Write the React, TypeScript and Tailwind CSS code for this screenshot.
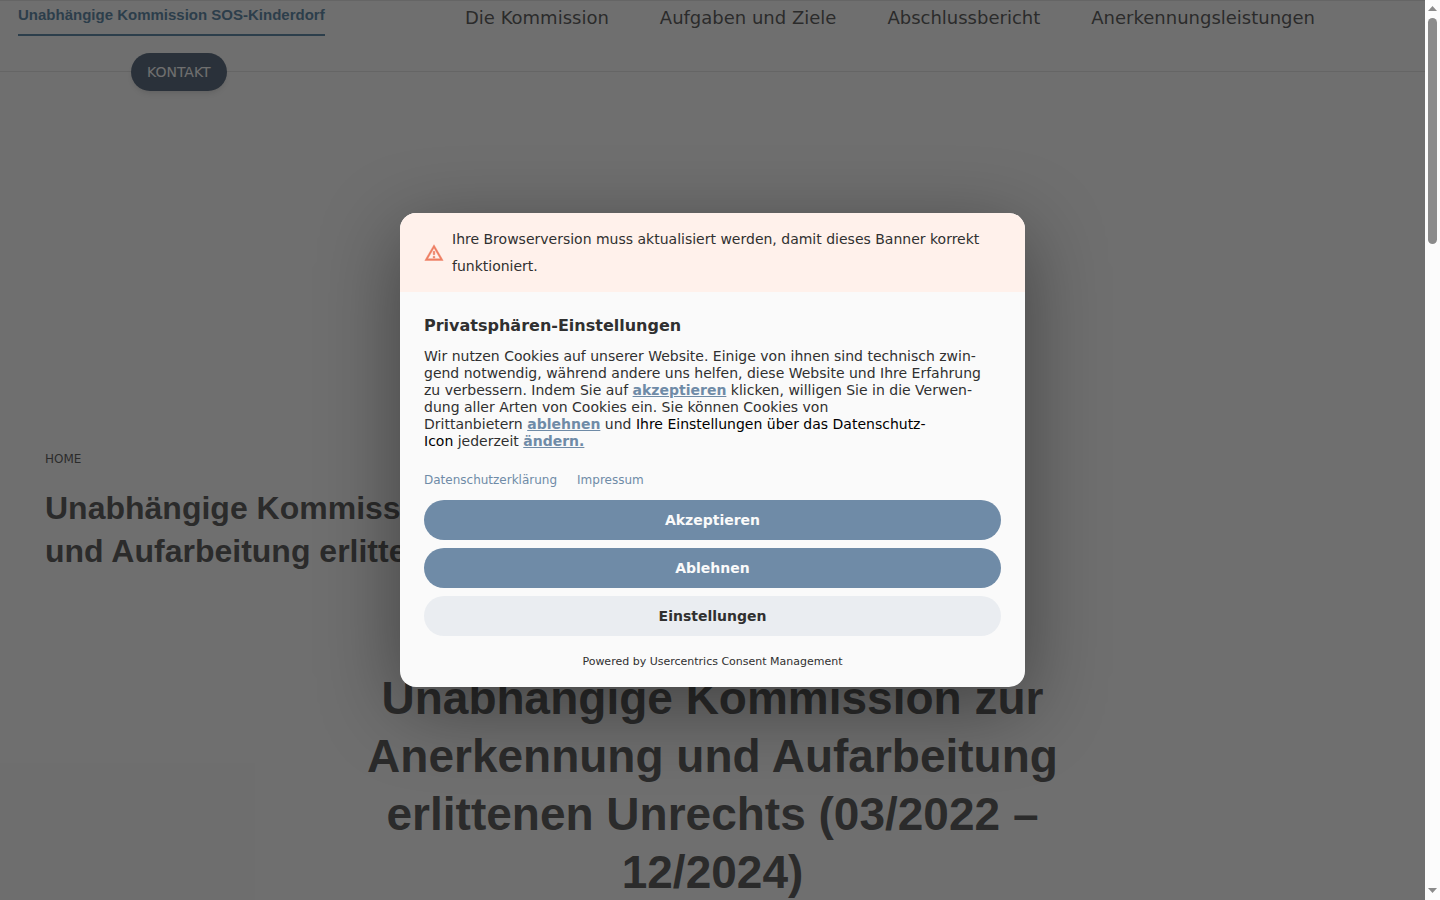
const navItems = [
  "Die Kommission",
  "Aufgaben und Ziele",
  "Abschlussbericht",
  "Anerkennungsleistungen",
];

const linkClass = "font-bold text-[#6f8ba7] underline";

function WarningIcon() {
  return (
    <svg
      viewBox="0 0 24 24"
      aria-hidden="true"
      className="h-5 w-5 shrink-0 fill-[#ee7f63] stroke-[#ee7f63] stroke-[0.5]"
    >
      <path d="M12 5.990 19.530 19H4.470L12 5.990M12 2 1 21h22L12 2zm1 14h-2v2h2v-2zm0-6h-2v4h2v-4z" />
    </svg>
  );
}

function Header() {
  return (
    <header className="relative flex h-[72px] items-start justify-between border-y border-[#e0e0e0] pl-[18px] pr-[110px]">
      <a
        href="#"
        className="border-b-2 border-[#3c7096] pb-[9px] pt-1 font-['Liberation_Sans',sans-serif] text-[15px] font-bold leading-5 text-[#3c7096]"
      >
        Unabhängige Kommission SOS-Kinderdorf
      </a>
      <nav className="flex gap-[51px] pt-[5px] text-lg leading-6 text-[#393939]">
        {navItems.map((item) => (
          <a key={item} href="#">
            {item}
          </a>
        ))}
      </nav>
      <button className="absolute left-[131px] top-[52px] h-[38px] rounded-full bg-[#354a64] px-4 text-sm text-white shadow-md">
        KONTAKT
      </button>
    </header>
  );
}

function CookieDialog() {
  return (
    <div
      role="dialog"
      aria-labelledby="cookie-title"
      className="w-[625px] overflow-hidden rounded-2xl bg-[#fafafa] text-[#303030] shadow-[0_20px_80px_rgba(0,0,0,0.4)]"
    >
      <div className="flex items-center gap-2 bg-[#fff1eb] px-6 pb-3 pt-[13px]">
        <WarningIcon />
        <p className="text-sm leading-[27px]">
          Ihre Browserversion muss aktualisiert werden, damit dieses Banner
          korrekt funktioniert.
        </p>
      </div>

      <div className="px-6 pb-[17px] pt-6">
        <h2 id="cookie-title" className="text-base font-bold leading-5">
          Privatsphären-Einstellungen
        </h2>
        <p className="mt-3 text-sm leading-[17px]">
          Wir nutzen Cookies auf unserer Website. Einige von ihnen sind
          technisch zwin&shy;gend notwendig, während andere uns helfen, diese
          Website und Ihre Erfahrung zu verbessern. Indem Sie auf{" "}
          <a href="#" className={linkClass}>
            akzeptieren
          </a>{" "}
          klicken, willigen Sie in die Verwen&shy;dung aller Arten von Cookies
          ein. Sie können Cookies von Drittanbietern&nbsp;
          <a href="#" className={linkClass}>
            ablehnen
          </a>{" "}
          und{" "}
          <span className="text-black">
            Ihre Einstellungen über das Datenschutz-Icon
          </span>
          &nbsp;jederzeit&nbsp;
          <a href="#" className={linkClass}>
            ändern.
          </a>
        </p>

        <div className="mt-[22px] flex gap-5 text-xs leading-4 text-[#6f8ba7]">
          <a href="#">Datenschutzerklärung</a>
          <a href="#">Impressum</a>
        </div>

        <div className="mt-3 flex flex-col gap-2 text-sm font-bold">
          <button className="h-10 rounded-full bg-[#6f8ba7] text-[#fafafa]">
            Akzeptieren
          </button>
          <button className="h-10 rounded-full bg-[#6f8ba7] text-[#fafafa]">
            Ablehnen
          </button>
          <button className="h-10 rounded-full bg-[#eaedf1]">
            Einstellungen
          </button>
        </div>

        <p className="mt-[18px] text-center text-[11px] leading-4">
          Powered by Usercentrics Consent Management
        </p>
      </div>
    </div>
  );
}

function Scrollbar() {
  return (
    <div className="flex w-[15px] shrink-0 flex-col items-center bg-[#fcfcfc]">
      <svg viewBox="0 0 15 18" className="h-[18px] w-[15px] fill-[#8b8b8b]">
        <path d="M3 11 7.500 6 12 11z" />
      </svg>
      <div className="h-[226px] w-[9px] rounded-full bg-[#8b8b8b]" />
      <svg
        viewBox="0 0 15 18"
        className="mt-auto h-[18px] w-[15px] fill-[#8b8b8b]"
      >
        <path d="M3 6 7.500 11 12 6z" />
      </svg>
    </div>
  );
}

export default function App() {
  return (
    <div className="flex h-screen font-['DejaVu_Sans',sans-serif]">
      <div className="relative min-w-0 flex-1 overflow-hidden bg-white">
        <Header />
        <main className="text-[#393939]">
          <section className="px-[45px] pt-[379px]">
            <a href="#" className="block w-fit text-xs leading-4">
              HOME
            </a>
            <h1 className="mt-5 font-['Liberation_Sans',sans-serif] text-[32px] font-bold leading-[43px]">
              Unabhängige Kommission zur Anerkennung
              <br />
              und Aufarbeitung erlittenen Unrechts
            </h1>
          </section>
          <h2 className="mx-auto mt-24 max-w-[712px] text-center font-['Liberation_Sans',sans-serif] text-[46px] font-bold leading-[58px]">
            Unabhängige Kommission zur Anerkennung und Aufarbeitung erlittenen
            Unrechts (03/2022&nbsp;–
            <br />
            12/2024)
          </h2>
        </main>
        <div className="absolute inset-0 flex items-center justify-center bg-[#242424]/66">
          <CookieDialog />
        </div>
      </div>
      <Scrollbar />
    </div>
  );
}
